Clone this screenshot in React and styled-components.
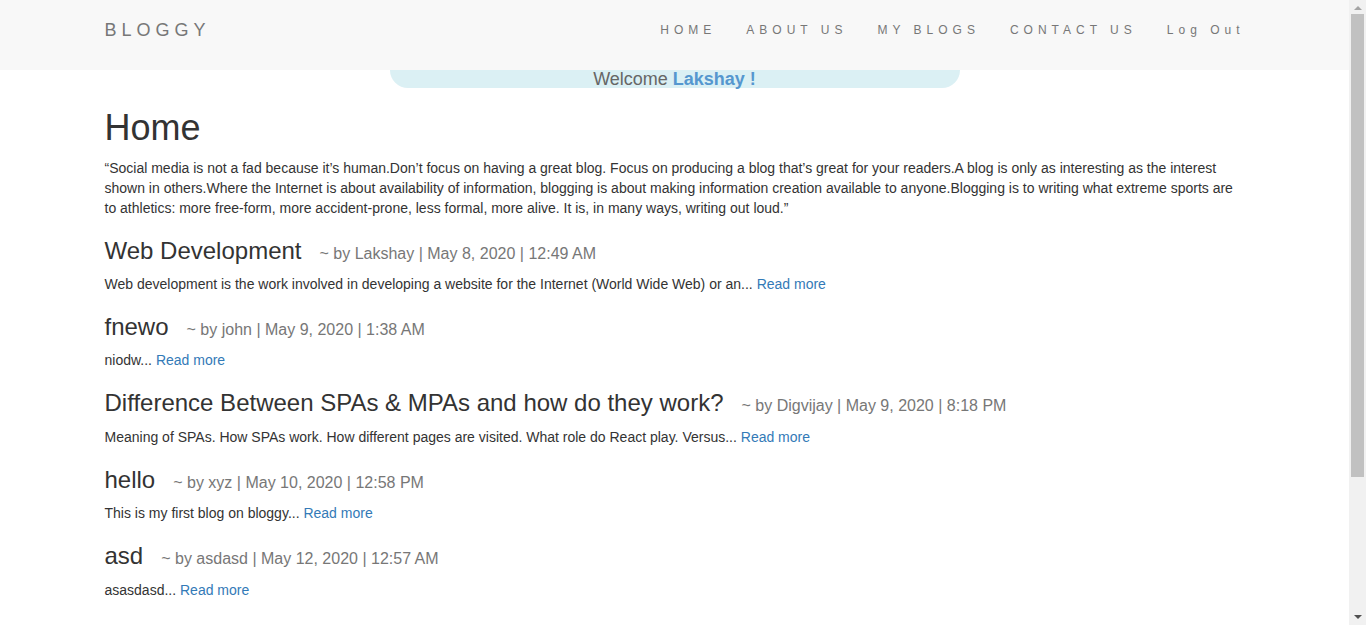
import React from 'react'
import styled, { createGlobalStyle } from 'styled-components'

const GlobalStyle = createGlobalStyle`
  html, body {
    margin: 0;
    padding: 0;
    background: #fff;
  }
  body {
    font-family: "Liberation Sans", Arial, Helvetica, sans-serif;
    font-size: 14px;
    line-height: 1.42857143;
    color: #333;
  }
`

const Shell = styled.div`
  display: flex;
  align-items: flex-start;
`

const Page = styled.div`
  flex: 1;
  min-width: 0;
`

// stand-in for the browser scrollbar seen in the screenshot
const ScrollTrack = styled.div`
  position: sticky;
  top: 0;
  width: 17px;
  height: 100vh;
  flex-shrink: 0;
  background: #f1f1f1;
  display: flex;
  flex-direction: column;
  align-items: center;
`

const Arrow = styled.div`
  width: 0;
  height: 0;
  margin: ${(p) => (p.down ? 'auto 0 6px' : '6px 0 4px')};
  border-left: 4px solid transparent;
  border-right: 4px solid transparent;
  ${(p) => (p.down ? 'border-top: 4px solid #505050;' : 'border-bottom: 4px solid #a3a3a3;')}
`

const Thumb = styled.div`
  width: 13px;
  height: 463px;
  background: #c1c1c1;
`

const Navbar = styled.nav`
  height: 70px;
  background-color: #f8f8f8;
`

const Container = styled.div`
  width: 1170px;
  margin: 0 auto;
  padding: 0 15px;
  box-sizing: border-box;
`

const NavInner = styled(Container)`
  display: flex;
  align-items: flex-start;
  justify-content: space-between;
  padding-top: 20px;
`

const Brand = styled.a`
  font-size: 18px;
  letter-spacing: 5px;
  color: #777;
  text-decoration: none;
  line-height: 20px;
`

const NavList = styled.ul`
  display: flex;
  list-style: none;
  margin: 0 -15px 0 0;
  padding: 0;
`

const NavLink = styled.a`
  display: block;
  padding: 0 15px;
  font-size: 12px;
  letter-spacing: 5px;
  color: #777;
  text-decoration: none;
  line-height: 20px;
`

const Welcome = styled.div`
  width: 570px;
  height: 18px;
  margin: 0 auto;
  background-color: #dbf0f4;
  border-radius: 0 0 18px 18px;
  text-align: center;
  font-size: 18px;
  line-height: 18px;
  color: #666;
`

const UserName = styled.b`
  color: #5597cf;
`

const Main = styled(Container)`
  padding-bottom: 57px;
`

const Title = styled.h1`
  font-size: 36px;
  font-weight: 500;
  line-height: 1.1;
  margin: 20px 0 10px;
  color: #333;
`

const Text = styled.p`
  margin: 0 0 10px;
`

const PostTitle = styled.h3`
  font-size: 24px;
  font-weight: 500;
  line-height: 1.1;
  margin: 20px 0 10px;
  color: #333;
`

const Meta = styled.small`
  font-size: 16px;
  font-weight: 400;
  color: #777;
  margin-left: 18px;
`

const ReadMore = styled.a`
  color: #337ab7;
  text-decoration: none;
`

const links = ['HOME', 'ABOUT US', 'MY BLOGS', 'CONTACT US', 'Log Out']

const posts = [
  {
    title: 'Web Development',
    author: 'Lakshay',
    date: 'May 8, 2020 | 12:49 AM',
    body: 'Web development is the work involved in developing a website for the Internet (World Wide Web) or an'
  },
  { title: 'fnewo', author: 'john', date: 'May 9, 2020 | 1:38 AM', body: 'niodw' },
  {
    title: 'Difference Between SPAs & MPAs and how do they work?',
    author: 'Digvijay',
    date: 'May 9, 2020 | 8:18 PM',
    body: 'Meaning of SPAs. How SPAs work. How different pages are visited. What role do React play. Versus'
  },
  { title: 'hello', author: 'xyz', date: 'May 10, 2020 | 12:58 PM', body: 'This is my first blog on bloggy' },
  { title: 'asd', author: 'asdasd', date: 'May 12, 2020 | 12:57 AM', body: 'asasdasd' }
]

export default function App() {
  return (
    <Shell>
      <GlobalStyle />
      <Page>
        <Navbar>
          <NavInner>
            <Brand href="#">BLOGGY</Brand>
            <NavList>
              {links.map((l) => (
                <li key={l}>
                  <NavLink href="#">{l}</NavLink>
                </li>
              ))}
            </NavList>
          </NavInner>
        </Navbar>
        <Welcome>
          Welcome <UserName>Lakshay !</UserName>
        </Welcome>
        <Main>
          <Title>Home</Title>
          <Text>
            “Social media is not a fad because it’s human.Don’t focus on having a great blog. Focus on producing a blog
            that’s great for your readers.A blog is only as interesting as the interest shown in others.Where the
            Internet is about availability of information, blogging is about making information creation available to
            anyone.Blogging is to writing what extreme sports are to athletics: more free-form, more accident-prone,
            less formal, more alive. It is, in many ways, writing out loud.”
          </Text>
          {posts.map((p) => (
            <div key={p.title}>
              <PostTitle>
                {p.title}
                <Meta>
                  ~ by {p.author} | {p.date}
                </Meta>
              </PostTitle>
              <Text>
                {p.body}... <ReadMore href="#">Read more</ReadMore>
              </Text>
            </div>
          ))}
        </Main>
      </Page>
      <ScrollTrack>
        <Arrow />
        <Thumb />
        <Arrow down />
      </ScrollTrack>
    </Shell>
  )
}
